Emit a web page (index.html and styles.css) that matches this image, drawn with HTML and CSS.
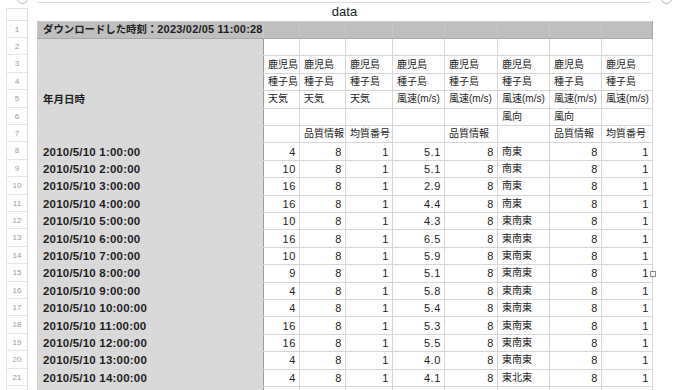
FILE: index.html
```html
<!DOCTYPE html>
<html lang="ja">
<head>
<meta charset="utf-8">
<link rel="stylesheet" href="styles.css">
</head>
<body>
<div class="sheet">
  <div class="rowhdr">
    <div class="corner"></div>
    <div class="rh">1</div><div class="rh">2</div><div class="rh">3</div><div class="rh">4</div><div class="rh">5</div>
    <div class="rh">6</div><div class="rh">7</div><div class="rh">8</div><div class="rh">9</div><div class="rh">10</div>
    <div class="rh">11</div><div class="rh">12</div><div class="rh">13</div><div class="rh">14</div><div class="rh">15</div>
    <div class="rh">16</div><div class="rh">17</div><div class="rh">18</div><div class="rh">19</div><div class="rh">20</div>
    <div class="rh">21</div><div class="rh"></div>
  </div>
  <div class="main">
    <div class="strip"></div>
    <div class="title">data</div>
    <table class="grid">
      <colgroup>
        <col class="ca"><col class="cb"><col class="cc"><col class="cd"><col class="ce"><col class="cf"><col class="cg"><col class="ch"><col class="ci">
      </colgroup>
      <tr class="r1"><td class="a"><span class="jp">ダウンロードした時刻：</span>2023/02/05 11:00:28</td><td></td><td></td><td></td><td></td><td></td><td></td><td></td><td></td></tr>
      <tr><td class="a"></td><td></td><td></td><td></td><td></td><td></td><td></td><td></td><td></td></tr>
      <tr class="hd"><td class="a"></td><td>鹿児島</td><td>鹿児島</td><td>鹿児島</td><td>鹿児島</td><td>鹿児島</td><td>鹿児島</td><td>鹿児島</td><td>鹿児島</td></tr>
      <tr class="hd"><td class="a"></td><td>種子島</td><td>種子島</td><td>種子島</td><td>種子島</td><td>種子島</td><td>種子島</td><td>種子島</td><td>種子島</td></tr>
      <tr class="hd"><td class="a">年月日時</td><td>天気</td><td>天気</td><td>天気</td><td>風速(m/s)</td><td>風速(m/s)</td><td>風速(m/s)</td><td>風速(m/s)</td><td>風速(m/s)</td></tr>
      <tr class="hd"><td class="a"></td><td></td><td></td><td></td><td></td><td></td><td>風向</td><td>風向</td><td></td></tr>
      <tr class="hd"><td class="a"></td><td></td><td>品質情報</td><td>均質番号</td><td></td><td>品質情報</td><td></td><td>品質情報</td><td>均質番号</td></tr>
      <tr><td class="a">2010/5/10 1:00:00</td><td class="n">4</td><td class="n">8</td><td class="n">1</td><td class="n">5.1</td><td class="n">8</td><td class="t">南東</td><td class="n">8</td><td class="n">1</td></tr>
      <tr><td class="a">2010/5/10 2:00:00</td><td class="n">10</td><td class="n">8</td><td class="n">1</td><td class="n">5.1</td><td class="n">8</td><td class="t">南東</td><td class="n">8</td><td class="n">1</td></tr>
      <tr><td class="a">2010/5/10 3:00:00</td><td class="n">16</td><td class="n">8</td><td class="n">1</td><td class="n">2.9</td><td class="n">8</td><td class="t">南東</td><td class="n">8</td><td class="n">1</td></tr>
      <tr><td class="a">2010/5/10 4:00:00</td><td class="n">16</td><td class="n">8</td><td class="n">1</td><td class="n">4.4</td><td class="n">8</td><td class="t">南東</td><td class="n">8</td><td class="n">1</td></tr>
      <tr><td class="a">2010/5/10 5:00:00</td><td class="n">10</td><td class="n">8</td><td class="n">1</td><td class="n">4.3</td><td class="n">8</td><td class="t">東南東</td><td class="n">8</td><td class="n">1</td></tr>
      <tr><td class="a">2010/5/10 6:00:00</td><td class="n">16</td><td class="n">8</td><td class="n">1</td><td class="n">6.5</td><td class="n">8</td><td class="t">東南東</td><td class="n">8</td><td class="n">1</td></tr>
      <tr><td class="a">2010/5/10 7:00:00</td><td class="n">10</td><td class="n">8</td><td class="n">1</td><td class="n">5.9</td><td class="n">8</td><td class="t">東南東</td><td class="n">8</td><td class="n">1</td></tr>
      <tr><td class="a">2010/5/10 8:00:00</td><td class="n">9</td><td class="n">8</td><td class="n">1</td><td class="n">5.1</td><td class="n">8</td><td class="t">東南東</td><td class="n">8</td><td class="n last">1<span class="handle"></span></td></tr>
      <tr><td class="a">2010/5/10 9:00:00</td><td class="n">4</td><td class="n">8</td><td class="n">1</td><td class="n">5.8</td><td class="n">8</td><td class="t">東南東</td><td class="n">8</td><td class="n">1</td></tr>
      <tr><td class="a">2010/5/10 10:00:00</td><td class="n">4</td><td class="n">8</td><td class="n">1</td><td class="n">5.4</td><td class="n">8</td><td class="t">東南東</td><td class="n">8</td><td class="n">1</td></tr>
      <tr><td class="a">2010/5/10 11:00:00</td><td class="n">16</td><td class="n">8</td><td class="n">1</td><td class="n">5.3</td><td class="n">8</td><td class="t">東南東</td><td class="n">8</td><td class="n">1</td></tr>
      <tr><td class="a">2010/5/10 12:00:00</td><td class="n">16</td><td class="n">8</td><td class="n">1</td><td class="n">5.5</td><td class="n">8</td><td class="t">東南東</td><td class="n">8</td><td class="n">1</td></tr>
      <tr><td class="a">2010/5/10 13:00:00</td><td class="n">4</td><td class="n">8</td><td class="n">1</td><td class="n">4.0</td><td class="n">8</td><td class="t">東南東</td><td class="n">8</td><td class="n">1</td></tr>
      <tr><td class="a">2010/5/10 14:00:00</td><td class="n">4</td><td class="n">8</td><td class="n">1</td><td class="n">4.1</td><td class="n">8</td><td class="t">東北東</td><td class="n">8</td><td class="n">1</td></tr>
      <tr><td class="a"></td><td></td><td></td><td></td><td></td><td></td><td></td><td></td><td></td></tr>
    </table>
  </div>
</div>
<span class="knob knob-l"></span>
<span class="knob knob-r"></span>
</body>
</html>
```
FILE: styles.css
```css
html, body {
  margin: 0;
  padding: 0;
  background: #ffffff;
  width: 700px;
  height: 390px;
  overflow: hidden;
  position: relative;
  font-family: "Liberation Sans", "Noto Sans CJK JP", sans-serif;
  color: #1e1e1e;
}

.sheet {
  display: flex;
  align-items: flex-start;
  padding-left: 6px;
}

.rowhdr {
  width: 22px;
  margin-top: 8px;
  border-left: 1px solid #e2e2e2;
  border-right: 1px solid #e2e2e2;
  box-sizing: border-box;
}

.corner {
  height: 12.7px;
  box-sizing: border-box;
  border-top: 1px solid #e2e2e2;
  border-bottom: 1px solid #e2e2e2;
}

.rh {
  height: 17.4px;
  box-sizing: border-box;
  border-bottom: 1px solid #e6e6e6;
  font-size: 8px;
  color: #9a9a9a;
  text-align: center;
  line-height: 17px;
}

.main {
  margin-left: 9px;
  width: 615px;
}

.strip {
  height: 3px;
  box-sizing: border-box;
  border-bottom: 1px solid #dcdcdc;
  margin-right: 2px;
}

.title {
  height: 17.7px;
  font-size: 13px;
  line-height: 13px;
  padding-top: 2px;
  box-sizing: border-box;
  text-align: center;
  color: #222;
}

.grid {
  border-collapse: collapse;
  table-layout: fixed;
  width: 615px;
}

.ca { width: 226px; }
.cb { width: 36px; }
.cc { width: 46px; }
.cd { width: 47px; }
.ce { width: 52px; }
.cf { width: 53px; }
.cg { width: 52px; }
.ch { width: 52px; }
.ci { width: 51px; }

.grid tr { height: 17.4px; }

.grid td {
  border: 1px solid #d6d6d6;
  padding: 0 4px;
  font-size: 10px;
  line-height: 14px;
  white-space: nowrap;
  overflow: visible;
  vertical-align: middle;
  position: relative;
}

.grid td.a {
  background: #d9d9d9;
  border-right: 1px solid #9d9d9d;
  font-weight: bold;
  font-size: 11.5px;
  letter-spacing: 0.2px;
  padding-left: 5px;
}

.grid tr.hd td.a {
  font-size: 10.5px;
  letter-spacing: 0;
}

.grid tr.r1 td {
  background: #bfbfbf;
  border-color: #c9c9c9;
  border-bottom: 1px solid #a8a8a8;
}

.grid tr.r1 td.a {
  font-size: 11px;
  letter-spacing: 0.2px;
  border-right-color: #c9c9c9;
}

.grid tr.r1 .jp {
  font-size: 10.4px;
  letter-spacing: 0;
}

.grid tr.r1 td:last-child {
  border-right: 1px solid #a8a8a8;
}

.grid td.n {
  text-align: right;
  font-size: 11px;
  letter-spacing: 0.6px;
  padding-right: 3px;
}

.grid td.t {
  font-size: 10px;
}

.handle {
  position: absolute;
  right: -4px;
  top: 6px;
  width: 4px;
  height: 4px;
  border: 1px solid #8a8a8a;
  background: #fff;
}

.knob {
  position: absolute;
  width: 9px;
  height: 9px;
  border: 1px solid #b5b5b5;
  border-radius: 50%;
  background: #fff;
  top: -7px;
}

.knob-l { left: 17px; }
.knob-r { left: 661px; }
```
